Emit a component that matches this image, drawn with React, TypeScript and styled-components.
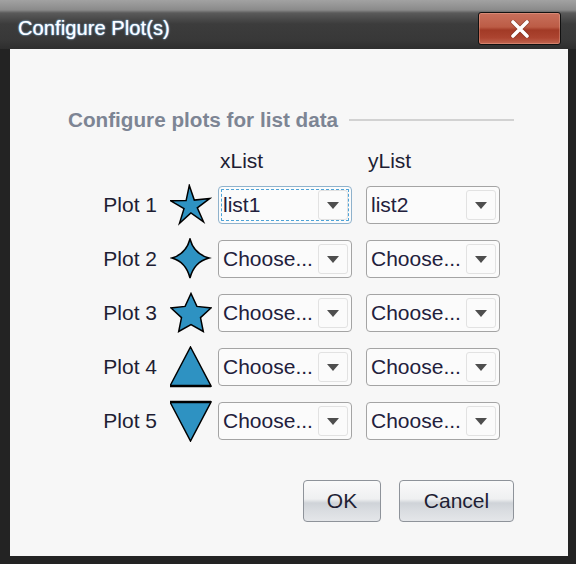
import React from 'react';
import styled, { createGlobalStyle } from 'styled-components';

const GlobalStyle = createGlobalStyle`
    html, body {
        margin: 0;
        padding: 0;
        background: #262626;
    }
`;

// Window frame
const Window = styled.div`
    width: 576px;
    height: 564px;
    display: flex;
    flex-direction: column;
    background: #232323;
    font-family: 'Liberation Sans', Arial, sans-serif;
    box-sizing: border-box;
`;

const TitleBar = styled.div`
    height: 49px;
    flex: none;
    box-sizing: border-box;
    padding: 8px 15px 0 18px;
    display: flex;
    align-items: center;
    justify-content: space-between;
    background: linear-gradient(
        #a2a2a2 0px,
        #8a8a8a 10px,
        #5a5a5a 13px,
        #3c3c3c 24px,
        #383838 40px,
        #2e2e2e 49px
    );
`;

const TitleText = styled.span`
    color: #ffffff;
    font-size: 20px;
    text-shadow: 0 0 2px #9fd3ff, 0 0 1px #6aaee8;
    letter-spacing: 0.1px;
`;

const CloseButton = styled.div`
    width: 83px;
    height: 33px;
    box-sizing: border-box;
    border: 1px solid #111;
    border-radius: 3px;
    display: flex;
    align-items: center;
    justify-content: center;
    background: linear-gradient(
        #c8705c 0%,
        #bc5c46 45%,
        #a23a26 55%,
        #ac4430 80%,
        #c26650 100%
    );
    box-shadow: inset 0 0 0 1px rgba(255, 200, 180, 0.3);
`;

// Dialog body
const Content = styled.div`
    flex: 1;
    margin: 0 8px 8px 10px;
    background: #f7f7f7;
    padding: 59px 54px 0 58px;
    box-sizing: border-box;
    display: flex;
    flex-direction: column;
`;

const SectionHeader = styled.div`
    display: flex;
    align-items: center;
    gap: 11px;
    height: 24px;
`;

const SectionTitle = styled.span`
    font-size: 20.7px;
    font-weight: bold;
    color: #7d8594;
    white-space: nowrap;
`;

const SectionLine = styled.div`
    flex: 1;
    height: 2px;
    background: #d2d2d2;
`;

const PlotGrid = styled.div`
    margin-top: 19px;
    display: grid;
    grid-template-columns: 102px 48px 148px 134px;
    grid-auto-rows: 38px;
    grid-template-rows: 19px;
    row-gap: 16px;
    align-items: center;
`;

const ColumnHeader = styled.div`
    font-size: 21px;
    line-height: 19px;
    color: #1e1e34;
    padding-left: 2px;
`;

const PlotLabel = styled.div`
    font-size: 21px;
    color: #1e1e34;
    text-align: right;
    padding-right: 13px;
`;

const IconCell = styled.div`
    display: flex;
    align-items: center;
    height: 42px;
`;

const Combo = styled.div<{ $focused?: boolean }>`
    width: 134px;
    height: 38px;
    box-sizing: border-box;
    border: 1px solid ${(p) => (p.$focused ? '#8fb2cc' : '#a4a4a4')};
    border-radius: 4px;
    background: #fbfbfb;
    display: flex;
    align-items: center;
    padding-left: 4px;
    outline: ${(p) => (p.$focused ? '1px dashed #4ea3d8' : 'none')};
    outline-offset: -4px;
`;

const ComboText = styled.span`
    flex: 1;
    font-size: 21px;
    color: #22203c;
    overflow: hidden;
    white-space: nowrap;
`;

const ArrowBox = styled.div`
    width: 30px;
    height: 30px;
    margin-right: 3px;
    box-sizing: border-box;
    border: 1px solid #e2e2e2;
    border-radius: 3px;
    display: flex;
    align-items: center;
    justify-content: center;
`;

const ButtonRow = styled.div`
    margin-top: 40px;
    display: flex;
    justify-content: flex-end;
    gap: 18px;
`;

const DialogButton = styled.div<{ $width: number }>`
    width: ${(p) => p.$width}px;
    height: 42px;
    box-sizing: border-box;
    border: 1px solid #8e939a;
    border-radius: 4px;
    display: flex;
    align-items: center;
    justify-content: center;
    font-size: 21px;
    color: #1e1e34;
    background: linear-gradient(
        #fafafa 0%,
        #eff0f1 45%,
        #cfd3d8 55%,
        #dadde1 75%,
        #e4e6e9 100%
    );
`;

const FILL = '#2e92c2';

const Arrow = () => (
    <svg width="12" height="7" viewBox="0 0 12 7">
        <path d="M0 0 L12 0 L6 7 Z" fill="#4e4e4e" />
    </svg>
);

const starPoints = (cx: number, cy: number, outer: number, inner: number, tilt = 0) => {
    const pts: string[] = [];
    for (let i = 0; i < 10; i++) {
        const r = i % 2 === 0 ? outer : inner;
        const a = (Math.PI / 5) * i - Math.PI / 2 + tilt;
        pts.push(`${(cx + r * Math.cos(a)).toFixed(1)},${(cy + r * Math.sin(a)).toFixed(1)}`);
    }
    return pts.join(' ');
};

const PlotIcon = ({ kind }: { kind: number }) => {
    switch (kind) {
        case 0:
            return (
                <svg width="42" height="42" viewBox="0 0 42 42">
                    <polygon
                        points={starPoints(20.5, 22, 20.5, 7, -0.06)}
                        fill={FILL}
                        stroke="#000"
                        strokeWidth="1.5"
                        strokeLinejoin="miter"
                    />
                </svg>
            );
        case 1:
            return (
                <svg width="42" height="42" viewBox="0 0 42 42">
                    <path
                        d="M20 1 Q24 16 39 20 Q24 24 20 40 Q16 24 2 20 Q16 16 20 1 Z"
                        fill={FILL}
                        stroke="#000"
                        strokeWidth="1.5"
                    />
                </svg>
            );
        case 2:
            return (
                <svg width="42" height="42" viewBox="0 0 42 42">
                    <polygon
                        points={starPoints(21, 22.5, 21, 10)}
                        fill={FILL}
                        stroke="#000"
                        strokeWidth="1.5"
                    />
                </svg>
            );
        case 3:
            return (
                <svg width="42" height="42" viewBox="0 0 42 42">
                    <polygon points="20.5,1 41,40 0,40" fill={FILL} stroke="#000" strokeWidth="1.5" />
                    <line x1="0" y1="40" x2="41" y2="40" stroke="#000" strokeWidth="2.5" />
                </svg>
            );
        default:
            return (
                <svg width="42" height="42" viewBox="0 0 42 42">
                    <polygon points="0,2 41,2 20.5,41" fill={FILL} stroke="#000" strokeWidth="1.5" />
                    <line x1="0" y1="2" x2="41" y2="2" stroke="#000" strokeWidth="2.5" />
                </svg>
            );
    }
};

type PlotRow = {
    label: string;
    x: string;
    y: string;
    focused?: boolean;
};

const rows: PlotRow[] = [
    { label: 'Plot 1', x: 'list1', y: 'list2', focused: true },
    { label: 'Plot 2', x: 'Choose...', y: 'Choose...' },
    { label: 'Plot 3', x: 'Choose...', y: 'Choose...' },
    { label: 'Plot 4', x: 'Choose...', y: 'Choose...' },
    { label: 'Plot 5', x: 'Choose...', y: 'Choose...' },
];

export default function App() {
    return (
        <>
            <GlobalStyle />
            <Window>
                <TitleBar>
                    <TitleText>Configure Plot(s)</TitleText>
                    <CloseButton>
                        <svg width="20" height="18" viewBox="0 0 20 18">
                            <path
                                d="M3 2 L17 16 M17 2 L3 16"
                                stroke="#6a2010"
                                strokeWidth="5"
                                strokeLinecap="round"
                                opacity="0.5"
                            />
                            <path
                                d="M3 2 L17 16 M17 2 L3 16"
                                stroke="#ffffff"
                                strokeWidth="3.6"
                                strokeLinecap="round"
                            />
                        </svg>
                    </CloseButton>
                </TitleBar>
                <Content>
                    <SectionHeader>
                        <SectionTitle>Configure plots for list data</SectionTitle>
                        <SectionLine />
                    </SectionHeader>
                    <PlotGrid>
                        <div />
                        <div />
                        <ColumnHeader>xList</ColumnHeader>
                        <ColumnHeader>yList</ColumnHeader>
                        {rows.map((row, i) => (
                            <React.Fragment key={row.label}>
                                <PlotLabel>{row.label}</PlotLabel>
                                <IconCell>
                                    <PlotIcon kind={i} />
                                </IconCell>
                                <Combo $focused={row.focused}>
                                    <ComboText>{row.x}</ComboText>
                                    <ArrowBox>
                                        <Arrow />
                                    </ArrowBox>
                                </Combo>
                                <Combo>
                                    <ComboText>{row.y}</ComboText>
                                    <ArrowBox>
                                        <Arrow />
                                    </ArrowBox>
                                </Combo>
                            </React.Fragment>
                        ))}
                    </PlotGrid>
                    <ButtonRow>
                        <DialogButton $width={78}>OK</DialogButton>
                        <DialogButton $width={115}>Cancel</DialogButton>
                    </ButtonRow>
                </Content>
            </Window>
        </>
    );
}
